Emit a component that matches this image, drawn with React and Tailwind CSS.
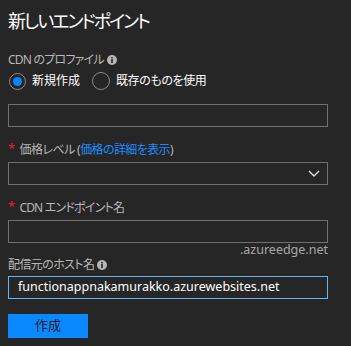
import React from "react";

const font = { fontFamily: '"Noto Sans", "Noto Sans CJK JP", sans-serif' };

function Info() {
  return (
    <svg width="10" height="10" viewBox="0 0 10 10" className="ml-[3px] inline-block shrink-0">
      <circle cx="5" cy="5" r="5" fill="#b5b5b5" />
      <rect x="4.2" y="4" width="1.6" height="4" fill="#262626" />
      <rect x="4.2" y="2" width="1.6" height="1.4" fill="#262626" />
    </svg>
  );
}

function Star() {
  return <span className="text-[#e8202e] text-[13px] leading-none mr-[5px] relative top-[-2px]">*</span>;
}

export default function App() {
  return (
    <div
      className="w-[351px] h-[346px] bg-[#262626] text-white overflow-hidden [font-feature-settings:'palt']"
      style={font}
    >
      <div className="pl-[8px] pr-[23px] pt-[8px]">
        <div className="text-[18px] leading-[26px] tracking-[-2px] text-white">新しいエンドポイント</div>

        <div className="mt-[17px] flex items-center h-[18px] text-[12px] tracking-[-0.8px] text-[#b8b8b8]">
          CDN のプロファイル
          <Info />
        </div>

        <div className="mt-[3px] flex items-center h-[18px]">
          <div className="w-[17px] h-[17px] rounded-full border border-[#8a8a8a] flex items-center justify-center ml-[1px]">
            <div className="w-[9px] h-[9px] rounded-full bg-[#0a84ff]" />
          </div>
          <span className="ml-[6px] text-[12px] text-white">新規作成</span>
          <div className="ml-[12px] w-[18px] h-[18px] rounded-full border border-[#8a8a8a]" />
          <span className="ml-[6px] text-[12px] tracking-[-0.4px] text-white">既存のものを使用</span>
        </div>

        <div className="mt-[14px] h-[23px] border border-[#707070]" />

        <div className="mt-[14px] flex items-center h-[18px] text-[12px] tracking-[-0.6px] text-[#b8b8b8]">
          <Star />
          価格レベル (<span className="text-[#1a8cff]">価格の詳細を表示</span>)
        </div>

        <div className="mt-[3px] h-[23px] border border-[#707070] flex items-center justify-end pr-[7px]">
          <svg width="12" height="7" viewBox="0 0 12 7">
            <path d="M1 1 L6 6 L11 1" stroke="#e0e0e0" strokeWidth="1.4" fill="none" />
          </svg>
        </div>

        <div className="mt-[14px] flex items-center h-[18px] text-[12px] tracking-[-0.8px] text-[#b8b8b8]">
          <Star />
          CDN エンドポイント名
        </div>

        <div className="mt-[3px] h-[23px] border border-[#707070]" />
        <div className="text-right text-[12.5px] leading-[14px] h-[14px] text-[#a8a8a8]">.azureedge.net</div>

        <div className="flex items-center h-[16px] text-[12px] tracking-[-0.6px] text-[#b8b8b8]">
          配信元のホスト名
          <Info />
        </div>

        <div className="mt-[3px] h-[23px] border border-[#6ab4ec] flex items-center pl-[9px] text-[12.5px] text-white">
          functionappnakamurakko.azurewebsites.net
        </div>

        <button className="mt-[15px] w-[80px] h-[24px] bg-[#0a89ff] text-[#1c1c1c] text-[13px] flex items-center justify-center">
          作成
        </button>
      </div>
    </div>
  );
}
